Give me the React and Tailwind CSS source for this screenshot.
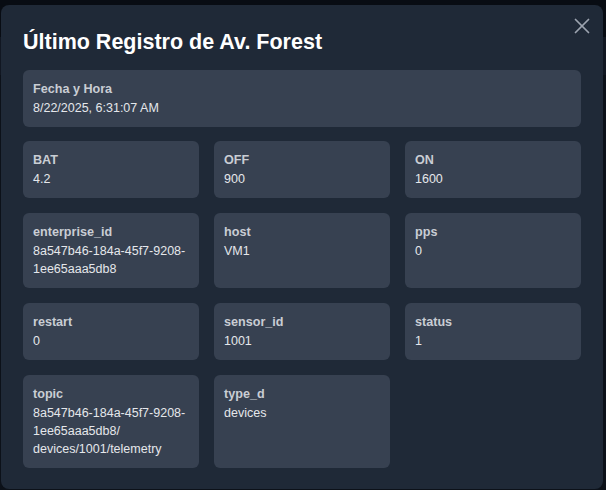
import { X } from 'lucide-react';

const fields = [
  { label: 'BAT', value: '4.2' },
  { label: 'OFF', value: '900' },
  { label: 'ON', value: '1600' },
  { label: 'enterprise_id', value: '8a547b46-184a-45f7-9208-1ee65aaa5db8' },
  { label: 'host', value: 'VM1' },
  { label: 'pps', value: '0' },
  { label: 'restart', value: '0' },
  { label: 'sensor_id', value: '1001' },
  { label: 'status', value: '1' },
  {
    label: 'topic',
    value: (
      <>
        8a547b46-184a-45f7-9208-1ee65aaa5db8/
        <br />
        devices/1001/telemetry
      </>
    ),
  },
  { label: 'type_d', value: 'devices' },
];

const Field = ({ label, value }) => (
  <div className="bg-[#374151] rounded-md p-[10px] min-w-0">
    <div className="text-[12.6px] leading-[18px] font-bold text-[#c9cdd4] mb-px">{label}</div>
    <div className="text-[12.5px] leading-[18px] text-[#e5e7eb] break-words">{value}</div>
  </div>
);

export default function App() {
  return (
    <div
      className="relative w-[606px] h-[490px] overflow-hidden bg-[#0c1119]"
      style={{ fontFamily: '"Liberation Sans", Arial, sans-serif' }}
    >
      {/* dimmed page behind the modal */}
      <div className="h-[37px] bg-[#080c13]" />
      <div className="h-[38px] bg-[#111722]" />

      <div className="absolute left-px top-[5px] w-[602px] h-[484px] bg-[#1f2937] rounded-lg px-[22px] pt-[22px]">
        <button className="absolute right-[8px] top-[8px] text-[#9ca3af]">
          <X className="w-[26px] h-[26px]" strokeWidth={1.6} />
        </button>

        <h2 className="text-[21.5px] leading-[30px] font-bold text-white mb-[13px]">
          Último Registro de Av. Forest
        </h2>

        <div className="mb-[14px]">
          <Field label="Fecha y Hora" value="8/22/2025, 6:31:07 AM" />
        </div>

        <div className="grid grid-cols-3 gap-[15px]">
          {fields.map((f) => (
            <Field key={f.label} label={f.label} value={f.value} />
          ))}
        </div>
      </div>
    </div>
  );
}
